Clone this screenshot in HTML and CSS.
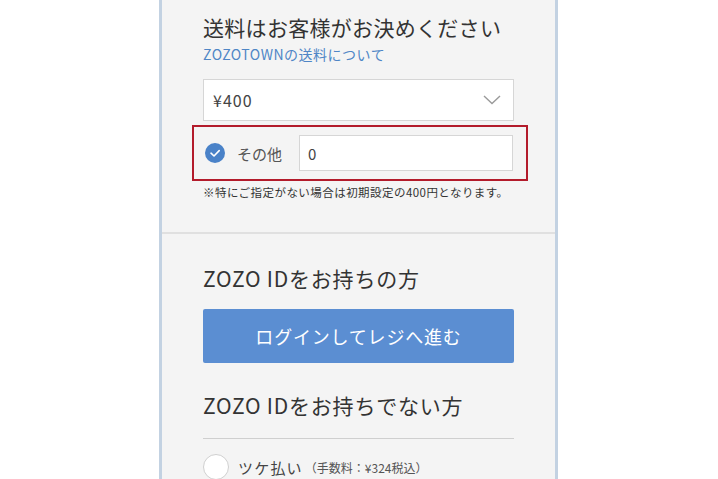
FILE: index.html
```html
<!DOCTYPE html>
<html lang="ja">
<head>
<meta charset="utf-8">
<link rel="stylesheet" href="styles.css">
</head>
<body>
<div class="phone">
  <section class="section shipping">
    <h2 class="title">送料はお客様がお決めください</h2>
    <a class="link" href="#">ZOZOTOWNの送料について</a>
    <div class="select">
      <span class="select-value">¥400</span>
      <svg class="chevron" width="18" height="10" viewBox="0 0 18 10"><polyline points="1,1 9,8.5 17,1" fill="none" stroke="#9a9a9a" stroke-width="1.4"/></svg>
    </div>
    <div class="other">
      <span class="check">
        <svg width="20" height="20" viewBox="0 0 20 20"><circle cx="10" cy="10" r="10" fill="#4a82c8"/><polyline points="6,10.2 9,13 14.2,7.6" fill="none" stroke="#fff" stroke-width="1.6" stroke-linecap="round" stroke-linejoin="round"/></svg>
      </span>
      <span class="other-label">その他</span>
      <div class="input">0</div>
    </div>
    <p class="note">※特にご指定がない場合は初期設定の400円となります。</p>
  </section>
  <section class="section login">
    <h3 class="heading">ZOZO IDをお持ちの方</h3>
    <button class="btn">ログインしてレジへ進む</button>
    <h3 class="heading heading-guest">ZOZO IDをお持ちでない方</h3>
    <div class="rule"></div>
    <div class="radio-row">
      <span class="radio"></span>
      <span class="radio-label">ツケ払い</span>
      <span class="fee">（手数料：¥324税込）</span>
    </div>
  </section>
</div>
</body>
</html>
```

FILE: styles.css
```css
html, body {
  margin: 0;
  padding: 0;
  background: #ffffff;
  height: 479px;
  overflow: hidden;
}

body {
  font-family: "Noto Sans CJK JP", "Noto Sans", sans-serif;
  color: #333333;
}

.phone {
  margin-left: 159px;
  width: 393px;
  height: 479px;
  background: #f4f4f4;
  border-left: 3px solid #c3d2e2;
  border-right: 3px solid #c3d2e2;
  overflow: hidden;
}

.section {
  padding: 0 41px;
}

.shipping {
  padding-top: 12px;
  padding-bottom: 32px;
  border-bottom: 2px solid #e0e0e0;
}

.title {
  margin: 0;
  font-size: 21px;
  font-weight: 400;
  line-height: 30px;
  letter-spacing: 0.3px;
  color: #333;
}

.link {
  display: block;
  margin-top: 3px;
  font-size: 14px;
  line-height: 18px;
  letter-spacing: 0.5px;
  color: #4f86c6;
  text-decoration: none;
}

.select {
  margin-top: 16px;
  height: 40px;
  background: #fff;
  border: 1px solid #d6d6d6;
  display: flex;
  align-items: center;
  justify-content: space-between;
  padding: 0 12px 0 9px;
}

.select-value {
  font-size: 16px;
  letter-spacing: 1px;
  color: #444;
}

.chevron {
  display: block;
}

.other {
  margin: 4px -14px 0 -11px;
  border: 2px solid #b31b2b;
  padding: 8px 13px 8px 11px;
  display: flex;
  align-items: center;
}

.check {
  display: flex;
  width: 20px;
  height: 20px;
}

.other-label {
  margin-left: 12px;
  font-size: 15px;
  color: #555;
  width: 62px;
}

.input {
  flex: 1;
  height: 34px;
  background: #fff;
  border: 1px solid #d6d6d6;
  display: flex;
  align-items: center;
  padding-left: 8px;
  font-size: 15px;
  color: #444;
}

.note {
  margin: 3px 0 0;
  font-size: 11.5px;
  line-height: 16px;
  letter-spacing: 0.45px;
  color: #333;
}

.login {
  padding-top: 30px;
}

.heading {
  margin: 0;
  font-size: 21px;
  font-weight: 400;
  line-height: 28px;
  letter-spacing: 0.8px;
  color: #333;
}

.btn {
  display: flex;
  align-items: center;
  justify-content: center;
  width: 100%;
  margin-top: 17px;
  height: 54px;
  border: none;
  border-radius: 2px;
  background: #5b8ed2;
  color: #fff;
  font-family: "Noto Sans CJK JP", "Noto Sans", sans-serif;
  font-size: 18px;
  letter-spacing: 0.8px;
  padding: 0;
}

.heading-guest {
  margin-top: 28px;
}

.rule {
  margin-top: 19px;
  height: 1px;
  background: #cfcfcf;
}

.radio-row {
  margin-top: 15px;
  display: flex;
  align-items: center;
}

.radio {
  width: 24px;
  height: 24px;
  border-radius: 50%;
  background: #fff;
  border: 1px solid #d0d0d0;
  flex: none;
}

.radio-label {
  margin-left: 9px;
  font-size: 15px;
  letter-spacing: 1.2px;
  color: #444;
}

.fee {
  margin-left: 2px;
  font-size: 12px;
  color: #555;
}
```
